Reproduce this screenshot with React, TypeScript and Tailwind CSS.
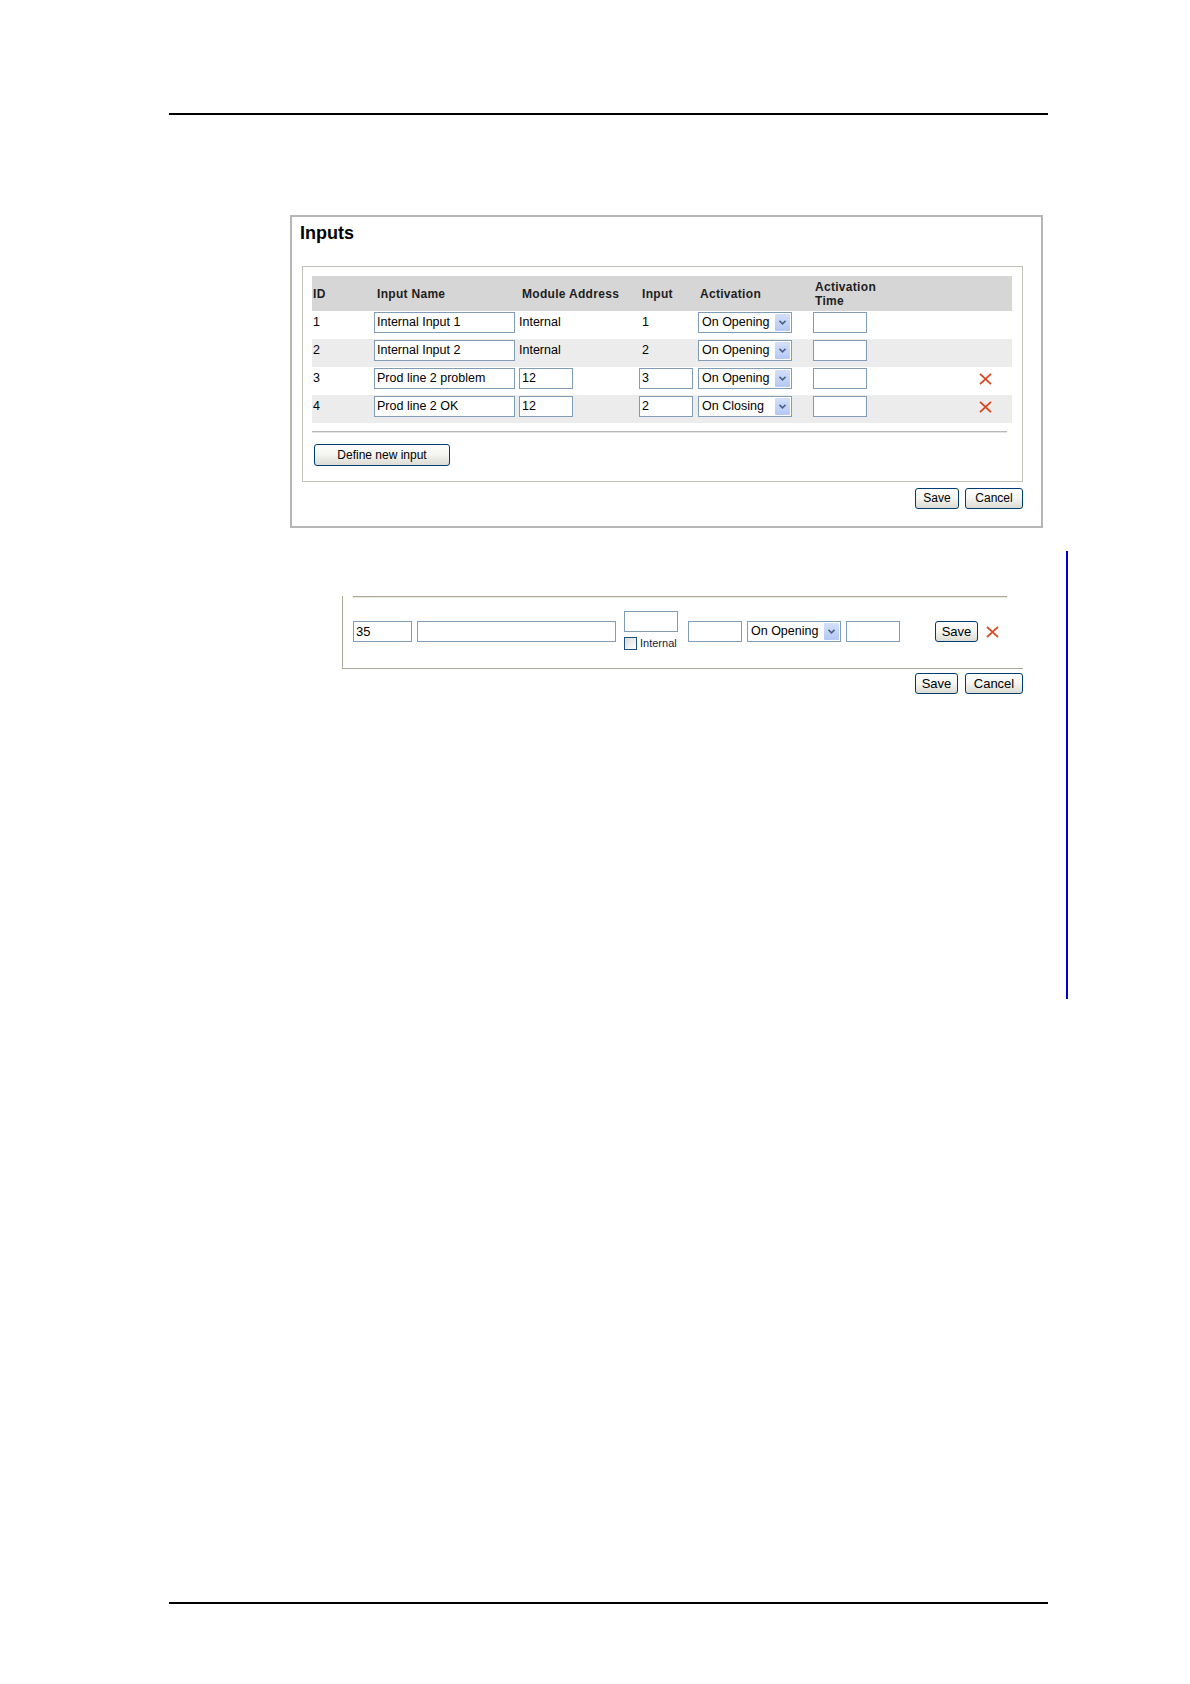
import React from 'react'

type Row = {
  id: string
  name: string
  module: string
  input: string
  activation: string
  editable: boolean
}

const rows: Row[] = [
  { id: '1', name: 'Internal Input 1', module: 'Internal', input: '1', activation: 'On Opening', editable: false },
  { id: '2', name: 'Internal Input 2', module: 'Internal', input: '2', activation: 'On Opening', editable: false },
  { id: '3', name: 'Prod line 2 problem', module: '12', input: '3', activation: 'On Opening', editable: true },
  { id: '4', name: 'Prod line 2 OK', module: '12', input: '2', activation: 'On Closing', editable: true },
]

function TextBox({ value = '', className = '' }: { value?: string; className?: string }) {
  return (
    <div
      className={`h-[21px] border border-[#7f9db9] bg-white pl-[2px] text-[12.5px] leading-[19px] text-black whitespace-nowrap overflow-hidden ${className}`}
    >
      {value}
    </div>
  )
}

function SelectBox({ value }: { value: string }) {
  return (
    <div className="flex h-[21px] w-[94px] items-center justify-between border border-[#7f9db9] bg-white pl-[3px] pr-[1px]">
      <span className="text-[12.5px] leading-[19px] text-black whitespace-nowrap">{value}</span>
      <span className="flex h-[17px] w-[15px] items-center justify-center rounded-[1px] bg-gradient-to-b from-[#d4e0fb] to-[#b4c8f4]">
        <svg width="7" height="5" viewBox="0 0 7 5">
          <path d="M0.5 0.8 L3.5 3.8 L6.5 0.8" fill="none" stroke="#4d6185" strokeWidth="1.6" />
        </svg>
      </span>
    </div>
  )
}

function XpButton({ label, className = '' }: { label: string; className?: string }) {
  return (
    <button
      className={`h-[21px] rounded-[3px] border border-[#003c74] bg-gradient-to-b from-white via-[#f4f4f0] to-[#dcdcd4] text-[12px] leading-[19px] text-black ${className}`}
    >
      {label}
    </button>
  )
}

function RemoveIcon() {
  return (
    <svg width="13" height="12" viewBox="0 0 13 12">
      <path d="M1 0.8 L12 11.2 M12 0.8 L1 11.2" stroke="#d9461b" strokeWidth="1.8" />
    </svg>
  )
}

export default function App() {
  return (
    <div className="min-h-[1684px] w-[1190px] bg-white font-['Liberation_Sans',Arial,sans-serif] text-black">
      {/* Top rule */}
      <div className="pt-[113px]">
        <div className="ml-[169px] h-[2px] w-[879px] bg-black" />
      </div>

      {/* Inputs panel */}
      <div className="ml-[290px] mt-[100px] box-border h-[313px] w-[753px] border-2 border-[#b6b6b6]">
        <h2 className="pl-[8px] pt-[5px] text-[18px] font-bold leading-[22px] text-black">Inputs</h2>

        <div className="ml-[10px] mt-[22px] box-border w-[721px] border border-[#c2c2ba] px-[9px] pb-[15px] pt-[9px]">
          <table className="w-[700px] table-fixed border-collapse">
            <colgroup>
              <col className="w-[62px]" />
              <col className="w-[145px]" />
              <col className="w-[120px]" />
              <col className="w-[59px]" />
              <col className="w-[115px]" />
              <col className="w-[147px]" />
              <col className="w-[52px]" />
            </colgroup>
            <thead>
              <tr className="h-[35px] bg-[#d6d6d6] text-left align-middle text-[12px] font-bold tracking-[0.3px] text-[#1e1e1e]">
                <th className="pl-[1px] font-bold">ID</th>
                <th className="pl-[3px] font-bold">Input Name</th>
                <th className="pl-[3px] font-bold">Module Address</th>
                <th className="pl-[3px] font-bold">Input</th>
                <th className="pl-[2px] font-bold">Activation</th>
                <th className="pl-[2px] font-bold leading-[14px]">
                  Activation
                  <br />
                  Time
                </th>
                <th />
              </tr>
            </thead>
            <tbody>
              {rows.map((r, i) => (
                <tr key={r.id} className={`h-[28px] text-[12.5px] ${i % 2 === 1 ? 'bg-[#ececec]' : 'bg-white'}`}>
                  <td className="pb-[6px] pl-[1px] pt-[1px] align-middle">{r.id}</td>
                  <td className="pb-[6px] pt-[1px] align-middle">
                    <TextBox value={r.name} className="w-[141px]" />
                  </td>
                  <td className="pb-[6px] pt-[1px] align-middle">
                    {r.editable ? <TextBox value={r.module} className="w-[54px]" /> : <span>{r.module}</span>}
                  </td>
                  <td className="pb-[6px] pt-[1px] align-middle">
                    {r.editable ? <TextBox value={r.input} className="w-[54px]" /> : <span className="pl-[3px]">{r.input}</span>}
                  </td>
                  <td className="pb-[6px] pt-[1px] align-middle">
                    <SelectBox value={r.activation} />
                  </td>
                  <td className="pb-[6px] pt-[1px] align-middle">
                    <TextBox className="w-[54px]" />
                  </td>
                  <td className="pb-[6px] pt-[1px] align-middle">
                    {r.editable && (
                      <div className="flex justify-center pr-[1px]">
                        <RemoveIcon />
                      </div>
                    )}
                  </td>
                </tr>
              ))}
            </tbody>
          </table>

          <div className="mt-[8px] h-[2px] w-[695px] border-t border-b border-t-[#b8b8b8] border-b-[#e4e4e4]" />

          <XpButton label="Define new input" className="ml-[2px] mt-[11px] h-[22px] w-[136px]" />
        </div>

        <div className="mt-[6px] flex justify-end gap-[6px] pr-[18px]">
          <XpButton label="Save" className="w-[44px]" />
          <XpButton label="Cancel" className="w-[58px]" />
        </div>
      </div>

      {/* Edit row excerpt with margin change bar */}
      <div className="mt-[23px] flex">
        <div className="w-[1066px] pt-[43px]">
          <div className="ml-[342px] box-border h-[73px] w-[681px] border-b border-l border-[#aca899]">
            <div className="ml-[10px] mt-[2px] h-[2px] w-[654px] border-t border-b border-t-[#aca899] border-b-[#ece9d8]" />

            <div className="ml-[10px] mt-[13px] flex items-start">
              <TextBox value="35" className="mt-[10px] w-[59px] text-[13px]" />
              <TextBox className="ml-[5px] mt-[10px] w-[199px]" />
              <div className="ml-[8px] flex flex-col">
                <TextBox className="w-[54px]" />
                <div className="mt-[5px] flex items-center">
                  <span className="h-[13px] w-[13px] border border-[#1c5180] bg-gradient-to-br from-[#dcdcd7] to-white" />
                  <span className="ml-[3px] text-[11px] leading-[13px] text-[#1a1a3a]">Internal</span>
                </div>
              </div>
              <TextBox className="ml-[10px] mt-[10px] w-[54px]" />
              <div className="ml-[5px] mt-[10px]">
                <SelectBox value="On Opening" />
              </div>
              <TextBox className="ml-[5px] mt-[10px] w-[54px]" />
              <XpButton label="Save" className="ml-[35px] mt-[10px] w-[43px] text-[13px]" />
              <div className="ml-[8px] mt-[15px]">
                <RemoveIcon />
              </div>
            </div>
          </div>

          <div className="mt-[4px] flex w-[1023px] justify-end gap-[7px]">
            <XpButton label="Save" className="w-[43px] text-[13px]" />
            <XpButton label="Cancel" className="w-[58px] text-[13px]" />
          </div>
        </div>
        <div className="h-[448px] w-[2px] bg-[#0000cc]" />
      </div>

      {/* Bottom rule */}
      <div className="ml-[169px] mt-[603px] h-[2px] w-[879px] bg-black" />
    </div>
  )
}
